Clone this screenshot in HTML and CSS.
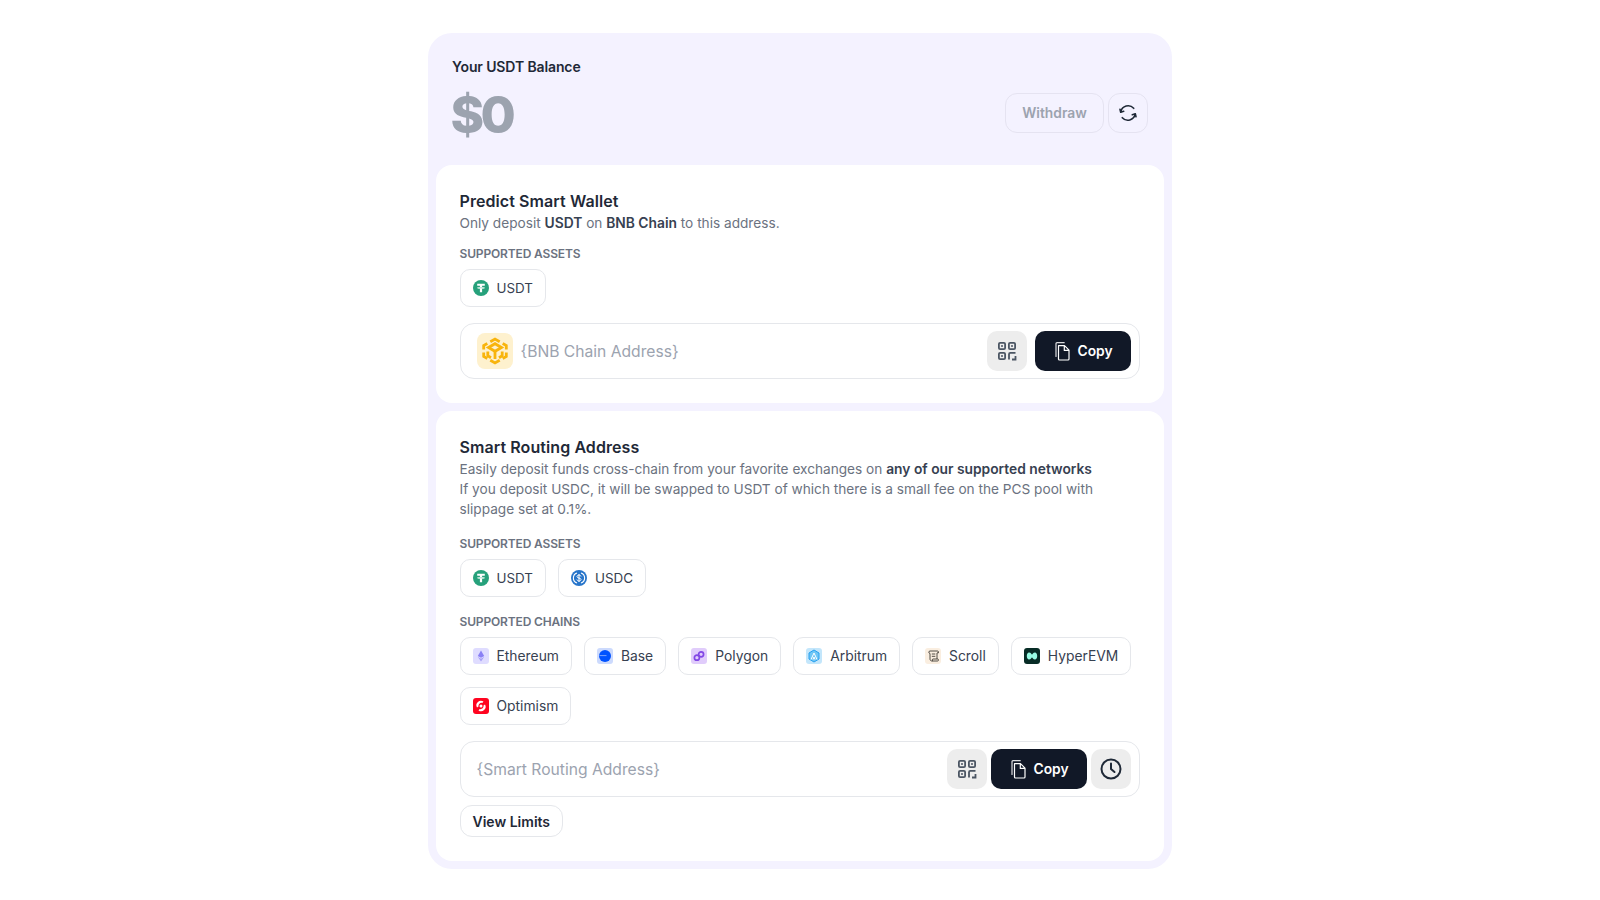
FILE: index.html
```html
<!DOCTYPE html>
<html lang="en">
<head>
<meta charset="utf-8">
<title>USDT Balance</title>
<link rel="stylesheet" href="styles.css">
</head>
<body>
<svg class="defs" width="0" height="0" aria-hidden="true">
  <symbol id="usdt" viewBox="0 0 16 16"><circle cx="8" cy="8" r="8" fill="#26a17b"/><path d="M4.200 3.800h7.600v2H9.100v1.300c1.500.1 2.700.4 2.700.8s-1.200.7-2.700.8v3.500H6.900V8.700C5.400 8.600 4.200 8.300 4.200 7.900s1.200-.7 2.700-.8V5.800H4.200z" fill="#fff"/><path d="M5 7.800h6" stroke="#26a17b" stroke-width=".4"/></symbol>
  <symbol id="usdc" viewBox="0 0 16 16"><circle cx="8" cy="8" r="8" fill="#2775ca"/><path d="M6 2.900a5.400 5.400 0 0 0 0 10.200M10 2.900a5.400 5.400 0 0 1 0 10.200" fill="none" stroke="#fff" stroke-width="1.100"/><path d="M10 6.500C9.700 5.500 9 5.100 8 5.100s-2 .5-2 1.500c0 2 4 1 4 2.900 0 1-.9 1.500-2 1.500s-1.800-.5-2.100-1.500M8 4v8" fill="none" stroke="#fff" stroke-width="1"/></symbol>
  <symbol id="qr" viewBox="0 0 20 20"><g fill="none" stroke="#4b5563" stroke-width="1.800"><rect x="1.900" y="1.900" width="6.200" height="6.200" rx="1.200"/><rect x="11.900" y="1.900" width="6.200" height="6.200" rx="1.200"/><rect x="1.900" y="11.900" width="6.200" height="6.200" rx="1.200"/><path d="M12 18.500v-5.300c0-.7.500-1.300 1.300-1.300h5.200M18.500 15v3.500H15"/></g><circle cx="5" cy="5" r="1" fill="#4b5563"/><circle cx="15" cy="5" r="1" fill="#4b5563"/><circle cx="5" cy="15" r="1" fill="#4b5563"/></symbol>
  <symbol id="copy" viewBox="0 0 20 20"><path d="M5.500 4.700h6l4.500 4.500V18a1 1 0 0 1-1 1H6.500a1 1 0 0 1-1-1zM11.300 4.900v4.500h4.500" fill="none" stroke="#fff" stroke-width="1.200" stroke-linejoin="round"/><path d="M3 15.500V2.700c0-.6.400-1 1-1h7.200" fill="none" stroke="#fff" stroke-width="1.200" stroke-linecap="round" opacity=".85"/></symbol>
</svg>
<main class="panel">
  <header class="balance">
    <div class="balance-info">
      <div class="balance-label">Your USDT Balance</div>
      <div class="balance-value">$0</div>
    </div>
    <div class="balance-actions">
      <button class="ghost withdraw">Withdraw</button>
      <button class="ghost refresh" aria-label="Refresh">
        <svg width="20" height="20" viewBox="0 0 20 20" fill="none" stroke="#1f2937" stroke-width="1.600" stroke-linecap="round" stroke-linejoin="round"><path d="M15.700 5.300A7.500 7.500 0 0 0 2.800 8.800"/><path d="M4.300 14.700A7.500 7.500 0 0 0 17.200 11.200"/><path d="M2 6.200 2.700 9.200 5.700 8.300M18 13.800 17.300 10.800 14.300 11.700"/></svg>
      </button>
    </div>
  </header>

  <section class="card">
    <h2 class="card-title">Predict Smart Wallet</h2>
    <p class="card-text">Only deposit <b>USDT</b> on <b>BNB Chain</b> to this address.</p>
    <h3 class="section-label">Supported Assets</h3>
    <div class="chips">
      <span class="chip asset"><svg class="chip-icon"><use href="#usdt"/></svg>USDT</span>
    </div>
    <div class="address">
      <span class="bnb">
        <svg width="26" height="28" viewBox="0 0 26 28" fill="none" stroke="#f8b40c" stroke-width="2.800"><path d="M8.300 4.700 13 2l4.700 2.700M20.700 6.500l3.600 2.100v4M24.300 15.400v4l-3.600 2.100M17.700 23.300 13 26l-4.700-2.700M5.300 21.500l-3.600-2.100v-4M1.700 12.600v-4l3.600-2.100"/><path d="M6.500 10.500 13 6.700l6.500 3.800L13 14.300z"/><path d="M13 14.300V22M5.800 14.500v4.300l3.200 1.900M20.200 14.500v4.300L17 20.700"/></svg>
      </span>
      <span class="address-text">{BNB Chain Address}</span>
      <button class="icon-btn qr-first" aria-label="QR code"><svg width="20" height="20"><use href="#qr"/></svg></button>
      <button class="copy"><svg width="20" height="20"><use href="#copy"/></svg>Copy</button>
    </div>
  </section>

  <section class="card">
    <h2 class="card-title">Smart Routing Address</h2>
    <p class="card-text">Easily deposit funds cross-chain from your favorite exchanges on <b>any of our supported networks</b><br>If you deposit USDC, it will be swapped to USDT of which there is a small fee on the PCS pool with slippage set at 0.1%.</p>
    <h3 class="section-label wide">Supported Assets</h3>
    <div class="chips">
      <span class="chip asset"><svg class="chip-icon"><use href="#usdt"/></svg>USDT</span>
      <span class="chip asset"><svg class="chip-icon"><use href="#usdc"/></svg>USDC</span>
    </div>
    <h3 class="section-label wide">Supported Chains</h3>
    <div class="chips">
      <span class="chip"><svg class="chip-icon" viewBox="0 0 16 16"><rect width="16" height="16" rx="3" fill="#dfdcff"/><path d="M8 2.500 4.800 8 8 9.800 11.200 8z" fill="#8a80f5"/><path d="M4.800 8.800 8 13.500l3.200-4.700L8 10.700z" fill="#a59ef7"/></svg>Ethereum</span>
      <span class="chip"><svg class="chip-icon" viewBox="0 0 16 16"><rect width="16" height="16" rx="3" fill="#ccdafd"/><circle cx="8" cy="8" r="6" fill="#0052ff"/><path d="M2.500 7.600h7" stroke="#ccdafd" stroke-width=".6"/></svg>Base</span>
      <span class="chip"><svg class="chip-icon" viewBox="0 0 16 16"><rect width="16" height="16" rx="3" fill="#e0ccfb"/><circle cx="5.900" cy="9.700" r="2.500" fill="none" stroke="#8247e5" stroke-width="1.700"/><circle cx="10.100" cy="6.300" r="2.500" fill="none" stroke="#8247e5" stroke-width="1.700"/></svg>Polygon</span>
      <span class="chip"><svg class="chip-icon" viewBox="0 0 16 16"><rect width="16" height="16" rx="3" fill="#c3e6fb"/><path d="M8 2 13 5v6l-5 3-5-3V5z" fill="#6ec6f5" stroke="#28a0f0" stroke-width="1"/><path d="M5 11.500 8 5l3 6.500M7 11.500 8 9l1 2.500" fill="none" stroke="#fff" stroke-width="1"/></svg>Arbitrum</span>
      <span class="chip"><svg class="chip-icon" viewBox="0 0 16 16"><rect width="16" height="16" rx="3" fill="#faeee0"/><path d="M5 3h7.500c.6 0 1 .5 1 1v.8H12M5 3c-.7 0-1.200.5-1.200 1.200 0 .8.500 1 1.200 1.300V11c0 1.100.700 2 1.800 2h5.700c.6 0 1-.4 1-1s-.4-1-1-1H8c-.3 0-.8.300-.8 1s.5 1 .8 1M12 5v6M6.800 6h3.500M6.800 8.300h3.500" fill="none" stroke="#3f3a33" stroke-width=".9"/></svg>Scroll</span>
      <span class="chip"><svg class="chip-icon" viewBox="0 0 16 16"><rect width="16" height="16" rx="3" fill="#072c26"/><path d="M2.800 8c0-2.200 1-3.400 2.200-3.400 2 0 2.500 2 3 2 .5 0 1-2 3-2 1.200 0 2.200 1.200 2.200 3.400s-1 3.400-2.200 3.400c-2 0-2.500-2-3-2-.5 0-1 2-3 2-1.200 0-2.200-1.200-2.200-3.400z" fill="#97fce4"/></svg>HyperEVM</span>
      <span class="chip"><svg class="chip-icon" viewBox="0 0 16 16"><rect width="16" height="16" rx="3" fill="#ff0420"/><path d="M4 9.500A4.500 4.500 0 0 1 10.500 3.600L9.300 5A3 3 0 0 0 5.500 8.500zM12 6.500A4.500 4.500 0 0 1 5.500 12.400L6.700 11A3 3 0 0 0 10.500 7.500z" fill="#fff"/><circle cx="8" cy="8" r="1.500" fill="#fff"/></svg>Optimism</span>
    </div>
    <div class="address routing">
      <span class="address-text">{Smart Routing Address}</span>
      <button class="icon-btn" aria-label="QR code"><svg width="20" height="20"><use href="#qr"/></svg></button>
      <button class="copy"><svg width="20" height="20"><use href="#copy"/></svg>Copy</button>
      <button class="icon-btn" aria-label="History">
        <svg width="24" height="24" viewBox="0 0 24 24" fill="none" stroke="#1f2937" stroke-width="2" stroke-linecap="round" stroke-linejoin="round"><circle cx="12" cy="12" r="9.500"/><path d="M12 6.500V12l3.500 3"/></svg>
      </button>
    </div>
    <button class="limits">View Limits</button>
  </section>
</main>
</body>
</html>
```
FILE: styles.css
```css
* { box-sizing: border-box; }
html, body { height: 100%; }
body {
  margin: 0;
  display: flex;
  justify-content: center;
  align-items: flex-start;
  padding-top: 33px;
  background: #fff;
  color: #1f2937;
  font-family: Inter, "Liberation Sans", sans-serif;
}
.defs { position: absolute; }
button { font-family: inherit; cursor: pointer; }

.panel {
  width: 744px;
  padding: 0 8px 8px;
  background: #f4f2ff;
  border-radius: 24px;
  display: flex;
  flex-direction: column;
  gap: 8px;
}

.balance {
  display: flex;
  justify-content: space-between;
  align-items: flex-end;
  padding: 24px 16px 20px;
  margin-bottom: -4px;
}
.balance-info { height: 84px; }
.balance-label {
  font-size: 14px;
  line-height: 20px;
  font-weight: 600;
  letter-spacing: -0.12px;
  color: #1f2937;
}
.balance-value {
  margin-top: 14px;
  margin-left: -1.5px;
  font-size: 51px;
  line-height: 48px;
  font-weight: 800;
  letter-spacing: -0.07em;
  color: #9ca3af;
}
.balance-actions { display: flex; gap: 4px; margin-bottom: 8px; }
.ghost {
  height: 40px;
  background: transparent;
  border: 1px solid #e5e3f1;
  border-radius: 12px;
  display: flex;
  align-items: center;
  justify-content: center;
}
.withdraw {
  width: 99px;
  font-size: 13.8px;
  font-weight: 600;
  color: #9ca3af;
}
.refresh { width: 40px; padding: 0; }

.card {
  background: #fff;
  border-radius: 16px;
  padding: 24px 24px 24px 23.5px;
  display: flex;
  flex-direction: column;
  align-items: stretch;
}
.card-title {
  margin: 0;
  font-size: 16px;
  line-height: 24px;
  font-weight: 600;
  letter-spacing: 0.08px;
  color: #1f2937;
}
.card-text {
  margin: 0;
  font-size: 13.65px;
  line-height: 20px;
  color: #6b7280;
}
.card-text b { font-size: 13.8px; font-weight: 600; color: #374151; }
.section-label {
  margin: 13px 0 7px;
  font-size: 12px;
  line-height: 16px;
  font-weight: 600;
  letter-spacing: -0.15px;
  text-transform: uppercase;
  color: #6b7280;
}
.section-label.wide { margin-top: 17px; }
.chips {
  display: flex;
  flex-wrap: wrap;
  gap: 12px;
}
.chip {
  height: 38px;
  padding: 0 12px;
  display: inline-flex;
  align-items: center;
  gap: 8px;
  border: 1px solid #e5e7eb;
  border-radius: 10px;
  font-size: 13.85px;
  color: #374151;
  background: #fff;
}
.chip.asset { font-size: 13.4px; }
.chip-icon { width: 16px; height: 16px; flex: none; }

.address {
  margin-top: 16px;
  height: 56px;
  padding: 0 8px 0 16px;
  display: flex;
  align-items: center;
  border: 1px solid #e5e7eb;
  border-radius: 14px;
}
.bnb {
  width: 36px;
  height: 36px;
  margin-right: 8px;
  flex: none;
  display: flex;
  align-items: center;
  justify-content: center;
  background: #fef1ce;
  border-radius: 8px;
}
.address-text {
  flex: 1;
  font-size: 15.65px;
  color: #9ca3af;
}
.icon-btn {
  width: 40px;
  height: 40px;
  padding: 0;
  flex: none;
  display: flex;
  align-items: center;
  justify-content: center;
  background: #ededed;
  border: 0;
  border-radius: 10px;
}
.copy {
  width: 96px;
  height: 40px;
  padding: 0;
  flex: none;
  display: flex;
  align-items: center;
  justify-content: center;
  gap: 4px;
  background: #111827;
  border: 0;
  border-radius: 10px;
  color: #fff;
  font-size: 13.8px;
  font-weight: 600;
}
.qr-first { margin-right: 8px; }
.routing { gap: 4px; }
.limits {
  align-self: flex-start;
  margin-top: 8px;
  height: 32px;
  padding: 0 12px;
  background: #fff;
  border: 1px solid #e5e7eb;
  border-radius: 12px;
  font-size: 14px;
  font-weight: 600;
  color: #1f2937;
}
```
